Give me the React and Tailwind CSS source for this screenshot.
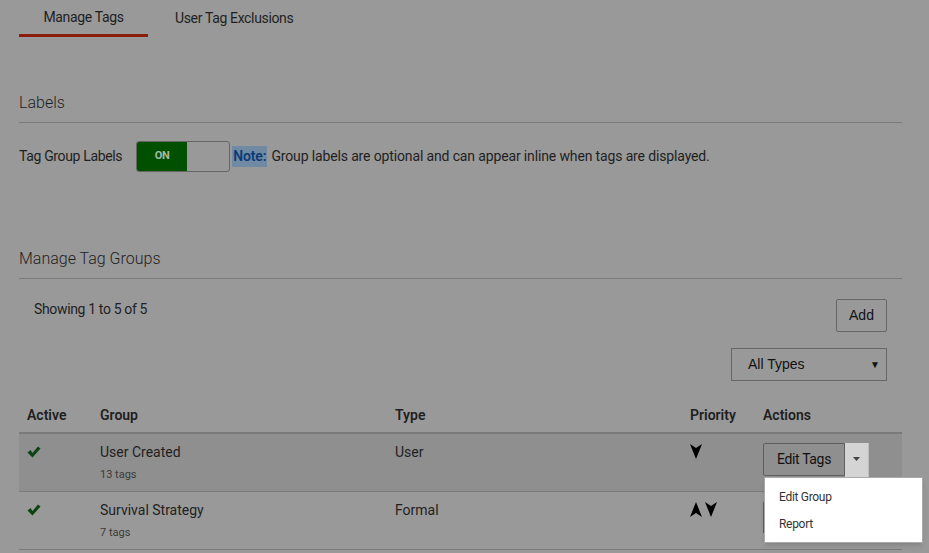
import React from "react";

const rows = [
    { name: "User Created", count: "13 tags", type: "User", up: false, down: true, open: true },
    { name: "Survival Strategy", count: "7 tags", type: "Formal", up: true, down: true, open: false },
];

function Check() {
    return (
        <svg width="14" height="12" viewBox="0 0 14 12">
            <path d="M0.5 6.5 L3.5 4 L5.5 7 L11 0.5 L13.5 2.5 L5.5 11.5 Z" fill="#0b4410" />
        </svg>
    );
}

function ArrowDown() {
    return (
        <svg width="12" height="15" viewBox="0 0 12 15">
            <path d="M0 0 L6 4 L12 0 L6 15 Z" fill="#000" />
        </svg>
    );
}

function ArrowUp() {
    return (
        <svg width="12" height="15" viewBox="0 0 12 15">
            <path d="M0 15 L6 11 L12 15 L6 0 Z" fill="#000" />
        </svg>
    );
}

function Row({ row, shaded }) {
    return (
        <div
            className={
                "relative grid grid-cols-[73px_295px_295px_73px_1fr] h-[58px] border-b border-[#7a7a7a] " +
                (shaded ? "bg-[#8f8f8f]" : "")
            }
        >
            <div className="px-2 pt-[12px]">
                <Check />
            </div>
            <div className="px-2 pt-[9px]">
                <div className="text-[14px] leading-[18px] text-[#1f1f1f]">{row.name}</div>
                <div className="text-[11px] leading-[14px] mt-[7px] text-[#3a3a3a]">{row.count}</div>
            </div>
            <div className="px-2 pt-[9px] text-[14px] leading-[18px] text-[#1f1f1f]">{row.type}</div>
            <div className="pl-2 pt-[10px] flex gap-[3px] items-start">
                {row.up && <ArrowUp />}
                {row.down && <ArrowDown />}
            </div>
            <div className="px-2 pt-[9px]">
                <div className="flex">
                    <button className="h-[33px] w-[82px] border border-[#5e5e5e] rounded-l-[2px] bg-[#8f8f8f] text-[14px] text-[#111] tracking-tight">
                        {row.open ? "Edit Tags" : ""}
                    </button>
                    {row.open && (
                        <div className="h-[35px] w-[24px] bg-[#d4d4d4] border-r border-[#bdbdbd] flex items-start justify-center pt-[14px]">
                            <svg width="7" height="4" viewBox="0 0 7 4">
                                <path d="M0 0 L7 0 L3.5 4 Z" fill="#444" />
                            </svg>
                        </div>
                    )}
                </div>
            </div>
            {row.open && (
                <div className="absolute z-10 left-[745px] top-[43px] w-[159px] h-[66px] bg-white border border-[#aaa] shadow-md py-[6px] text-[12px] text-[#333] tracking-tight">
                    <div className="px-[14px] leading-[27px]">Edit Group</div>
                    <div className="px-[14px] leading-[27px]">Report</div>
                </div>
            )}
        </div>
    );
}

export default function App() {
    return (
        <div
            className="min-h-[553px] w-[929px] bg-[#999999] pl-[19px] pr-[27px] text-[#1f1f1f]"
            style={{ fontFamily: "Roboto, 'Liberation Sans', sans-serif" }}
        >
            {/* tabs */}
            <div className="flex h-[37px] text-[14px] tracking-tight">
                <div className="w-[129px] flex flex-col items-center justify-between pt-[8px]">
                    <span className="leading-[18px]">Manage Tags</span>
                    <div className="h-[3px] w-full bg-[#8a1d0c]" />
                </div>
                <div className="px-[27px] pt-[8px]">
                    <span className="leading-[18px]">User Tag Exclusions</span>
                </div>
            </div>

            {/* Labels */}
            <div className="mt-[54px] pb-[7px] border-b border-[#7a7a7a] text-[16px] leading-[24px] font-light">
                Labels
            </div>
            <div className="mt-[18px] flex items-center h-[31px] text-[14px] tracking-[-0.01em]">
                <span className="mr-[14px] tracking-tight">Tag Group Labels</span>
                <div className="w-[94px] h-[31px] border border-[#666] rounded-[3px] flex p-0">
                    <div className="w-[50px] h-full bg-[#005000] rounded-l-[2px] flex items-center justify-center text-[11px] font-bold text-[#a5bba5]">
                        ON
                    </div>
                </div>
                <span className="ml-[2px] bg-[#6f8aa2] px-[1px] font-semibold text-[#0c3a76]">Note:</span>
                <span className="ml-[4px]">Group labels are optional and can appear inline when tags are displayed.</span>
            </div>

            {/* Manage Tag Groups */}
            <div className="mt-[75px] pb-[7px] border-b border-[#7a7a7a] text-[16px] leading-[24px] font-light">
                Manage Tag Groups
            </div>

            <div className="pr-[15px]">
                <div className="mt-[20px] flex justify-between">
                    <div className="pl-[15px] pt-[1px] text-[14px] leading-[18px] tracking-tight">Showing 1 to 5 of 5</div>
                    <button
                        className="h-[33px] w-[51px] border border-[#666] rounded-[2px] text-[14px] text-[#111]"
                        style={{ fontFamily: "'Liberation Sans', Arial, sans-serif" }}
                    >
                        Add
                    </button>
                </div>
                <div className="mt-[16px] flex justify-end">
                    <div
                        className="h-[33px] w-[156px] border border-[#666] flex items-center justify-between pl-[16px] pr-[6px] text-[14px] text-[#111]"
                        style={{ fontFamily: "'Liberation Sans', Arial, sans-serif" }}
                    >
                        <span>All Types</span>
                        <span className="text-[10px]">▼</span>
                    </div>
                </div>
            </div>

            {/* table */}
            <div className="mt-[17px]">
                <div className="grid grid-cols-[73px_295px_295px_73px_1fr] h-[36px] border-b-2 border-[#7a7a7a] text-[14px] font-semibold items-center">
                    <div className="px-2">Active</div>
                    <div className="px-2">Group</div>
                    <div className="px-2">Type</div>
                    <div className="px-2">Priority</div>
                    <div className="px-2">Actions</div>
                </div>
                {rows.map((r, i) => (
                    <Row key={r.name} row={r} shaded={i === 0} />
                ))}
            </div>
        </div>
    );
}
